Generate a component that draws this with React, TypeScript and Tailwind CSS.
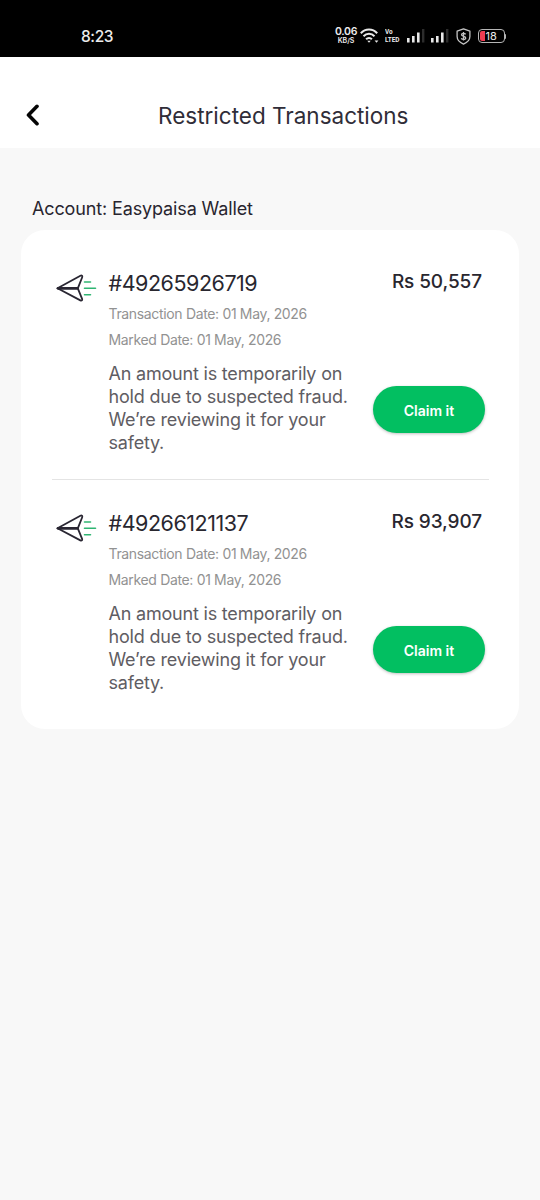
const transactions = [
  { id: "#49265926719", amount: "Rs 50,557", transactionDate: "01 May, 2026", markedDate: "01 May, 2026" },
  { id: "#49266121137", amount: "Rs 93,907", transactionDate: "01 May, 2026", markedDate: "01 May, 2026" },
];

type Transaction = (typeof transactions)[number];

function WifiIcon() {
  return (
    <svg width="20" height="16" viewBox="0 0 20 16" fill="none" stroke="#e8e8e8" strokeWidth="2">
      <path d="M0.8 5.2C5.4 0.2 12.6 0.2 17.2 5.2" />
      <path d="M3.5 8.3C6.6 5 11.4 5 14.5 8.3" />
      <path d="M6.1 11.2C7.7 9.5 10.3 9.5 11.9 11.2" />
      <path d="M7.3 12.8L9 14.8L10.7 12.8Z" fill="#e8e8e8" stroke="none" />
      <path d="M14.6 12.6h3.8l-1.9 2.2z" fill="#e8e8e8" stroke="none" />
    </svg>
  );
}

function SignalIcon() {
  return (
    <svg width="18" height="14" viewBox="0 0 18 14" fill="#e8e8e8">
      <rect x="0" y="9" width="2.6" height="4.5" />
      <rect x="5" y="7" width="2.6" height="6.5" />
      <rect x="10" y="3.5" width="2.6" height="10" />
      <rect x="15" y="0" width="2.4" height="13.5" fill="#2c2c2c" />
    </svg>
  );
}

function ShieldIcon() {
  return (
    <svg width="15" height="17" viewBox="0 0 15 17" fill="none" stroke="#c4c4c4" strokeWidth="1.3">
      <path d="M7.5 0.8L13.9 3.2V8.5C13.9 12 11 14.6 7.5 16.1C4 14.6 1.1 12 1.1 8.5V3.2Z" strokeLinejoin="round" />
      <path d="M9.6 6.4C9.2 5.6 8.5 5.3 7.5 5.3C6.3 5.3 5.5 5.9 5.5 6.8C5.5 9 9.7 7.7 9.7 9.9C9.7 10.8 8.8 11.4 7.5 11.4C6.4 11.4 5.6 11 5.3 10.2M7.5 4.1V12.6" />
    </svg>
  );
}

function SendIcon() {
  return (
    <svg width="42" height="28" viewBox="0 0 42 28" fill="none" strokeLinecap="round" strokeLinejoin="round">
      <path
        d="M1.5 14.3L24.4 1.7C25.7 1 26.7 1.9 26.2 3.2L21.8 14.3L26.1 24.9C26.6 26.2 25.7 27 24.4 26.4Z"
        stroke="#292632"
        strokeWidth="1.8"
      />
      <path d="M2 14.3H21.5" stroke="#292632" strokeWidth="2.7" />
      <path d="M28.5 8H34.5M28.5 14.3H39.5M28.5 20.8H34.5" stroke="#2fb572" strokeWidth="1.6" />
    </svg>
  );
}

function StatusBar() {
  return (
    <div className="flex h-[57px] items-center bg-black pt-[15px] pr-[34px] pl-[81px] text-[#ececec]">
      <span className="pt-px text-[15.5px] leading-7 font-medium tracking-[-0.4px]">8:23</span>
      <div className="ml-auto flex items-center">
        <div className="flex w-[23px] flex-col items-center font-semibold whitespace-nowrap">
          <span className="text-[10.5px] leading-[10px] tracking-[-0.3px]">0.06</span>
          <span className="text-[7px] leading-[8px]">KB/S</span>
        </div>
        <div className="ml-[2px]">
          <WifiIcon />
        </div>
        <div className="ml-[5px] flex w-[16px] origin-left scale-x-80 flex-col font-['Roboto'] text-[8px] leading-[8px] font-bold whitespace-nowrap">
          <span>Vo</span>
          <span>LTED</span>
        </div>
        <div className="ml-[6px]">
          <SignalIcon />
        </div>
        <div className="ml-[6px]">
          <SignalIcon />
        </div>
        <div className="ml-[7px]">
          <ShieldIcon />
        </div>
        <div className="ml-[7px] flex items-center">
          <div className="flex h-[14px] w-[27px] items-center rounded-[4px] border border-[#b5b5b5] p-px">
            <div className="h-[10px] w-[5px] rounded-l-[2px] bg-[#ef3d52]" />
            <span className="ml-px text-[11px] leading-[10px]">18</span>
          </div>
          <div className="h-[5px] w-[1.5px] rounded-r bg-[#b5b5b5]" />
        </div>
      </div>
    </div>
  );
}

function TransactionRow({ transaction }: { transaction: Transaction }) {
  return (
    <div className="flex h-[239px] px-[4px] pt-[29px]">
      <div className="w-[53px] shrink-0 pt-[5px]">
        <SendIcon />
      </div>
      <div className="-ml-[0.5px] w-[260px] shrink-0">
        <h2 className="text-[21.5px] leading-[28px] tracking-[-0.47px] text-[#29272f]">{transaction.id}</h2>
        <div className="mt-[4px] text-[14px] leading-[26px] tracking-[-0.34px] text-[#929292]">
          <p>Transaction Date: {transaction.transactionDate}</p>
          <p>Marked Date: {transaction.markedDate}</p>
        </div>
        <p className="mt-[9px] text-[18px] leading-[23px] tracking-[-0.2px] text-[#5f5d63]">
          An amount is temporarily on
          <br />
          hold due to suspected fraud.
          <br />
          We’re reviewing it for your
          <br />
          safety.
        </p>
      </div>
      <div className="ml-auto flex w-[116px] flex-col">
        <span className="mt-px self-end pr-[3px] text-[19px] leading-[24px] font-medium tracking-[-0.1px] whitespace-nowrap text-[#29272f]">
          {transaction.amount}
        </span>
        <button className="mt-[92px] ml-[4px] h-[47px] w-[112px] rounded-full bg-[#02bf61] pt-px text-[14px] font-semibold text-white shadow-[0_1px_3px_rgba(0,0,0,0.25)]">
          Claim it
        </button>
      </div>
    </div>
  );
}

export default function App() {
  return (
    <div className="min-h-[1200px] w-[540px] bg-[#f8f8f8] font-['Inter',sans-serif]">
      <StatusBar />
      <header className="flex h-[91px] items-center bg-white pt-[25px] pl-[26px]">
        <button aria-label="Back">
          <svg width="14" height="22" viewBox="0 0 14 22" fill="none" stroke="#050505" strokeWidth="3.6" strokeLinecap="round" strokeLinejoin="round">
            <path d="M11 2.3L2.5 11L11 19.7" />
          </svg>
        </button>
        <h1 className="mt-[2px] ml-[118px] text-[22.5px] leading-[28px] whitespace-nowrap text-[#302d38]">
          Restricted Transactions
        </h1>
      </header>

      <main className="pt-[49px] pl-[21px]">
        <p className="pl-[11px] text-[18px] leading-[24px] tracking-[-0.13px] text-[#28252f]">Account: Easypaisa Wallet</p>
        <section className="mt-[9px] w-[498px] rounded-[24px] bg-white py-[10px] pr-[30px] pl-[31px]">
          {transactions.map((t, i) => (
            <div key={t.id} className={i > 0 ? "border-t border-[#e4e4e4]" : ""}>
              <TransactionRow transaction={t} />
            </div>
          ))}
        </section>
      </main>
    </div>
  );
}
